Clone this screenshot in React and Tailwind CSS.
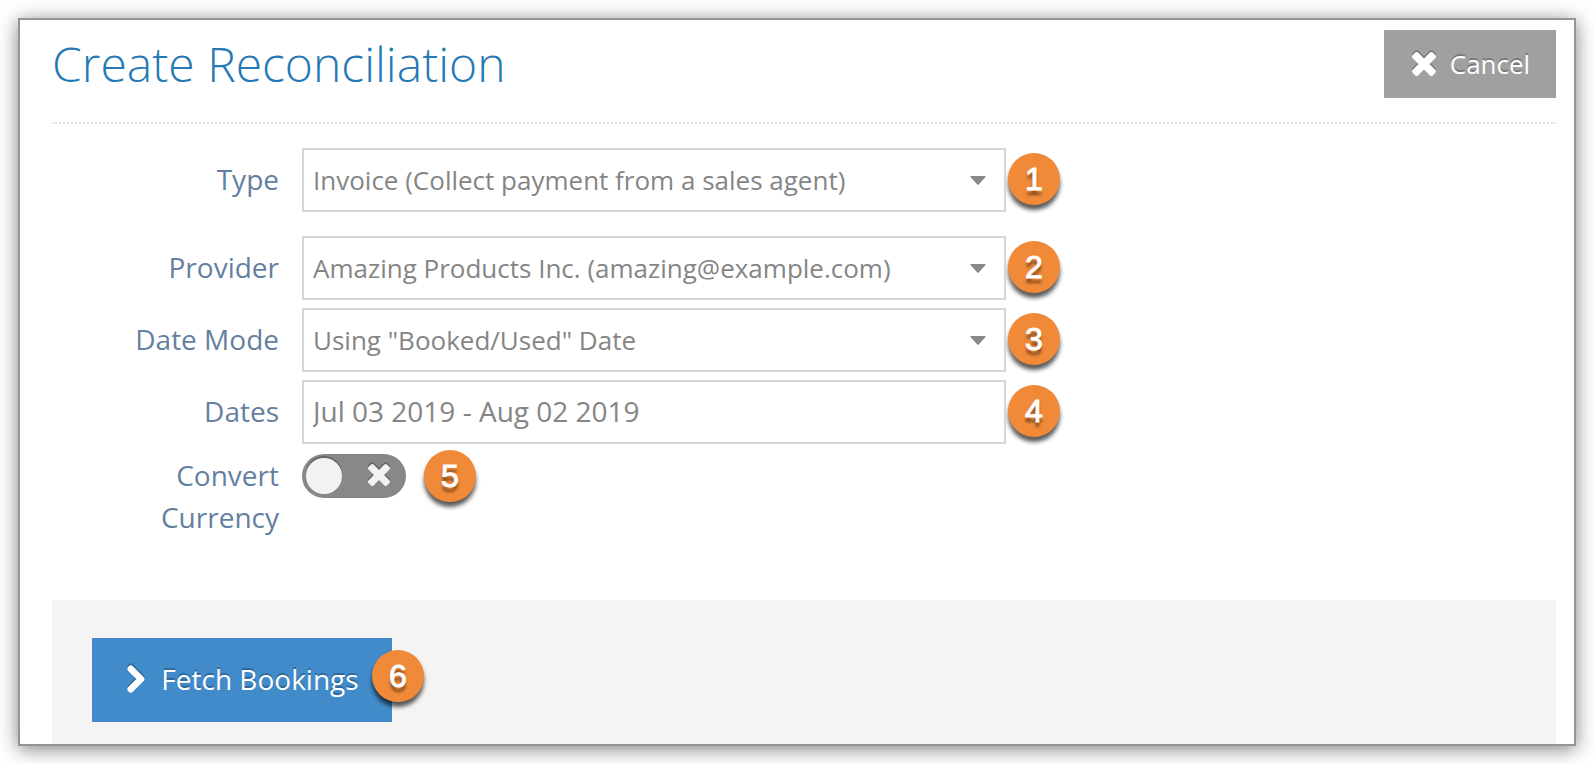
import React, { useState } from 'react';

const TimesIcon = ({ className }) => (
  <svg viewBox="302 366 1188 1188" className={className} fill="currentColor" aria-hidden="true">
    <path d="M1490 1322q0 40-28 68l-136 136q-28 28-68 28t-68-28l-294-294-294 294q-28 28-68 28t-68-28l-136-136q-28-28-28-68t28-68l294-294-294-294q-28-28-28-68t28-68l136-136q28-28 68-28t68 28l294 294 294-294q28-28 68-28t68 28l136 136q28 28 28 68t-28 68l-294 294 294 294q28 28 28 68z" />
  </svg>
);

const ChevronIcon = ({ className }) => (
  <svg viewBox="0 0 18 28" className={className} fill="none" stroke="currentColor" aria-hidden="true">
    <path d="M3.8 3.8 L14 14 L3.8 24.2" strokeWidth="6.6" strokeLinecap="round" strokeLinejoin="round" />
  </svg>
);

const Badge = ({ number, className = '' }) => (
  <span
    className={`flex size-[52px] shrink-0 items-center justify-center rounded-full bg-[#f08a38] font-['Liberation_Sans',Arial,sans-serif] text-[32px] leading-none text-white shadow-[0_5px_4px_rgba(0,0,0,0.65)] [-webkit-text-stroke:1px_white] [text-shadow:0_5px_3px_rgba(0,0,0,0.5)] ${className}`}
  >
    {number}
  </span>
);

const labelClass = 'mr-[23px] w-[227px] shrink-0 text-right text-[28px] leading-[42px] text-[#657fa0]';

const Row = ({ id, label, badge, children, className = '' }) => (
  <div className={`flex items-center ${className}`}>
    <label htmlFor={id} className={`${labelClass} mb-0.5`}>
      {label}
    </label>
    <div className="relative w-full max-w-[704px]">{children}</div>
    <Badge number={badge} className="mb-0.5 ml-0.5" />
  </div>
);

const fieldClass =
  'block h-16 w-full appearance-none rounded-none border-2 border-[#d5d5d5] bg-white px-[9px] text-[#858585] outline-none';

const SelectField = ({ id, options }) => (
  <>
    <select id={id} className={`${fieldClass} text-[26px]`}>
      {options.map((option) => (
        <option key={option}>{option}</option>
      ))}
    </select>
    <svg
      viewBox="0 0 16 9"
      className="pointer-events-none absolute top-7 right-5 h-[9px] w-4 text-[#888]"
      fill="currentColor"
      aria-hidden="true"
    >
      <path d="M1 0h14q1 0 .5 1L8.7 8.5q-.7.6-1.4 0L.5 1Q0 0 1 0z" />
    </svg>
  </>
);

const App = () => {
  const [dates, setDates] = useState('Jul 03 2019 - Aug 02 2019');
  const [convert, setConvert] = useState(false);

  return (
    <div className="min-h-screen bg-white p-[18px] font-['Open_Sans','Noto_Sans',sans-serif]">
      <main className="border-2 border-[#959595] bg-white pr-[18px] pl-8 shadow-[0_3px_18px_rgba(0,0,0,0.5)]">
        <header className="flex items-start justify-between border-b-2 border-dotted border-[#e2e2e2] pt-2.5 pb-6">
          <h1 className="text-[48px] leading-[68px] font-light text-[#2679b5]">Create Reconciliation</h1>
          <button
            type="button"
            className="flex h-[68px] w-[172px] items-center justify-center gap-3.5 bg-[#a0a0a0] pl-0.5 text-[26px] text-white [text-shadow:0_-2px_0_rgba(0,0,0,0.25)]"
          >
            <TimesIcon className="size-6 drop-shadow-[0_-2px_0_rgba(0,0,0,0.25)]" />
            Cancel
          </button>
        </header>

        <form onSubmit={(e) => e.preventDefault()}>
          <div className="flex flex-col gap-2 pt-6 pb-[62px]">
            <Row id="type" label="Type" badge={1} className="mb-4">
              <SelectField id="type" options={['Invoice (Collect payment from a sales agent)']} />
            </Row>
            <Row id="provider" label="Provider" badge={2}>
              <SelectField id="provider" options={['Amazing Products Inc. (amazing@example.com)']} />
            </Row>
            <Row id="date-mode" label="Date Mode" badge={3}>
              <SelectField id="date-mode" options={['Using "Booked/Used" Date']} />
            </Row>
            <Row id="dates" label="Dates" badge={4}>
              <input
                id="dates"
                type="text"
                value={dates}
                onChange={(e) => setDates(e.target.value)}
                className={`${fieldClass} pb-0.5 text-[28px]`}
              />
            </Row>
            <div className="flex items-start pt-0.5">
              <label htmlFor="convert" className={`${labelClass} pl-20`}>
                Convert Currency
              </label>
              <div className="flex h-11 items-center gap-[18px]">
                <div className="relative h-11 w-[104px]">
                  <input
                    id="convert"
                    type="checkbox"
                    role="switch"
                    checked={convert}
                    onChange={(e) => setConvert(e.target.checked)}
                    className="peer block h-11 w-[104px] appearance-none rounded-full bg-[#888] checked:bg-[#428bca]"
                  />
                  <span className="pointer-events-none absolute top-1 left-1 size-9 rounded-full bg-[#f2f2f2] shadow-[0_-2px_0_rgba(0,0,0,0.25)] peer-checked:left-16" />
                  <TimesIcon className="pointer-events-none absolute top-2.5 right-4 size-[22px] text-[#f2f2f2] drop-shadow-[0_-2px_0_rgba(0,0,0,0.25)] peer-checked:hidden" />
                </div>
                <Badge number={5} />
              </div>
            </div>
          </div>

          <footer className="bg-[#f4f4f4] px-10 pt-[38px] pb-[22px]">
            <div className="relative w-[300px]">
              <button
                type="submit"
                className="flex h-[84px] w-full items-center justify-center gap-4 bg-[#428bca] pb-0.5 pl-0.5 text-[28px] text-white [text-shadow:0_-2px_0_rgba(0,0,0,0.25)]"
              >
                <ChevronIcon className="h-7 w-[18px] drop-shadow-[0_-2px_0_rgba(0,0,0,0.25)]" />
                Fetch Bookings
              </button>
              <Badge number={6} className="absolute top-3 -right-8" />
            </div>
          </footer>
        </form>
      </main>
    </div>
  );
};

export default App;
